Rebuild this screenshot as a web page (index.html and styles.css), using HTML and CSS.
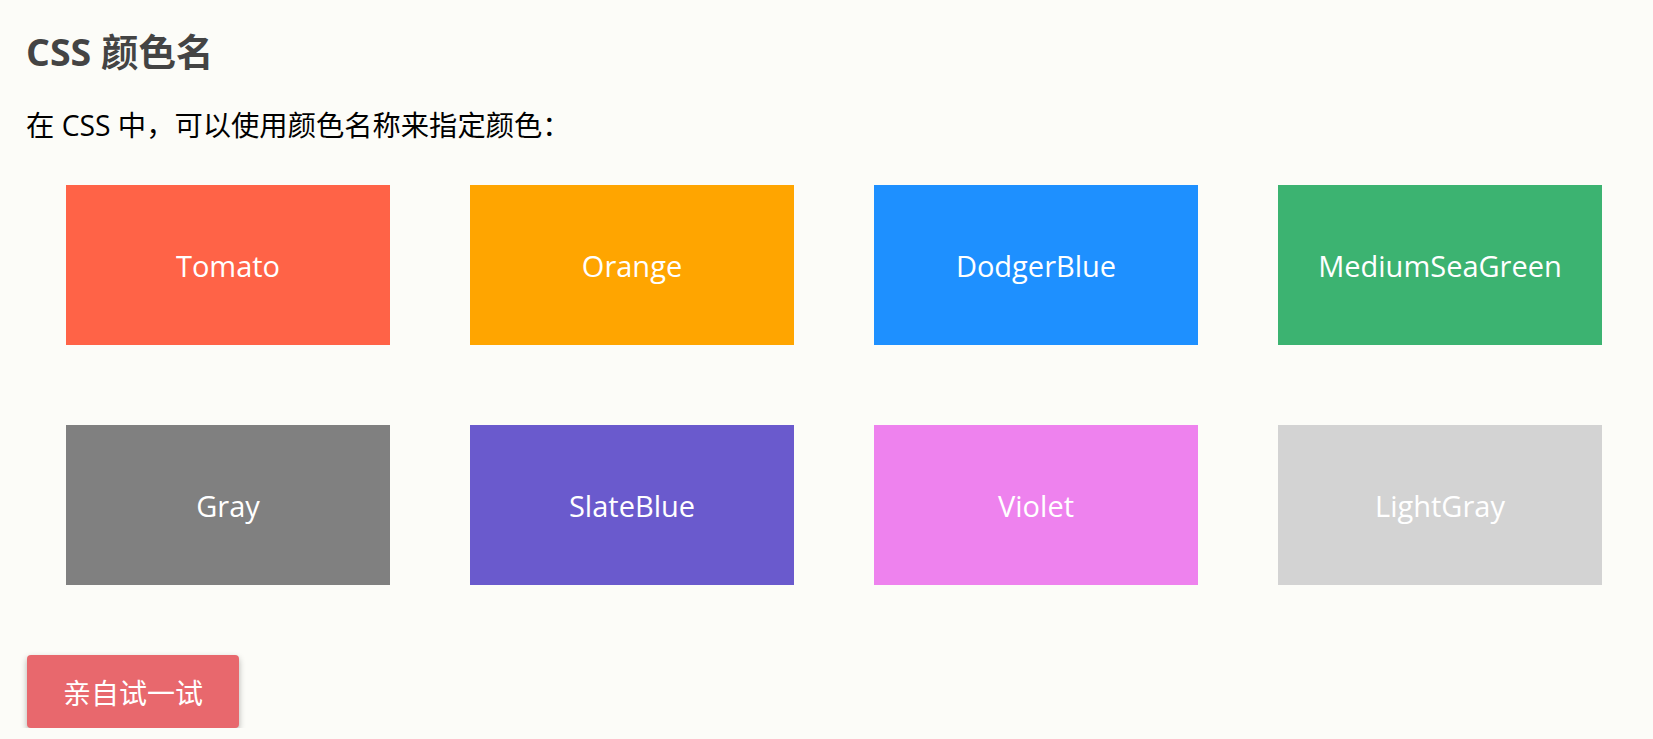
FILE: index.html
```html
<!DOCTYPE html>
<html lang="zh-CN">
<head>
<meta charset="utf-8">
<title>CSS 颜色名</title>
<link rel="stylesheet" href="styles.css">
</head>
<body>
<div class="page">
  <h2 class="title">CSS 颜色名</h2>
  <p class="intro">在 CSS 中，可以使用颜色名称来指定颜色：</p>
  <div class="grid">
    <div class="swatch swatch-tomato">Tomato</div>
    <div class="swatch swatch-orange">Orange</div>
    <div class="swatch swatch-dodgerblue">DodgerBlue</div>
    <div class="swatch swatch-mediumseagreen">MediumSeaGreen</div>
    <div class="swatch swatch-gray">Gray</div>
    <div class="swatch swatch-slateblue">SlateBlue</div>
    <div class="swatch swatch-violet">Violet</div>
    <div class="swatch swatch-lightgray">LightGray</div>
  </div>
  <button class="try-btn" type="button">亲自试一试</button>
</div>
</body>
</html>
```

FILE: styles.css
```css
html, body {
  margin: 0;
  padding: 0;
  background: #fcfcf8;
}

body {
  font-family: "Open Sans", "Noto Sans CJK SC", sans-serif;
  color: #000;
}

.page {
  padding: 27px 11px 0 26px;
}

.title {
  margin: 0;
  font-size: 37.5px;
  line-height: 50px;
  font-weight: 700;
  color: #444;
}

.intro {
  margin: 29px 0 0 0;
  font-size: 28.3px;
  line-height: 39px;
}

.grid {
  display: grid;
  grid-template-columns: repeat(4, 1fr);
  margin-top: 0;
}

.swatch {
  margin: 40px;
  height: 160px;
  display: flex;
  align-items: center;
  justify-content: center;
  color: #fff;
  font-size: 29px;
}

.swatch-tomato { background: #ff6347; }
.swatch-orange { background: #ffa500; }
.swatch-dodgerblue { background: #1e90ff; }
.swatch-mediumseagreen { background: #3cb371; }
.swatch-gray { background: #808080; }
.swatch-slateblue { background: #6a5acd; }
.swatch-violet { background: #ee82ee; }
.swatch-lightgray { background: #d3d3d3; }

.try-btn {
  display: block;
  margin: 30px 0 0 1px;
  width: 212px;
  height: 73px;
  border: none;
  border-radius: 4px;
  background: #e8686d;
  color: #fff;
  font-family: "Noto Sans CJK SC", sans-serif;
  font-size: 28px;
  box-shadow: 0 3px 6px rgba(0, 0, 0, 0.3);
  padding: 0;
}
```
